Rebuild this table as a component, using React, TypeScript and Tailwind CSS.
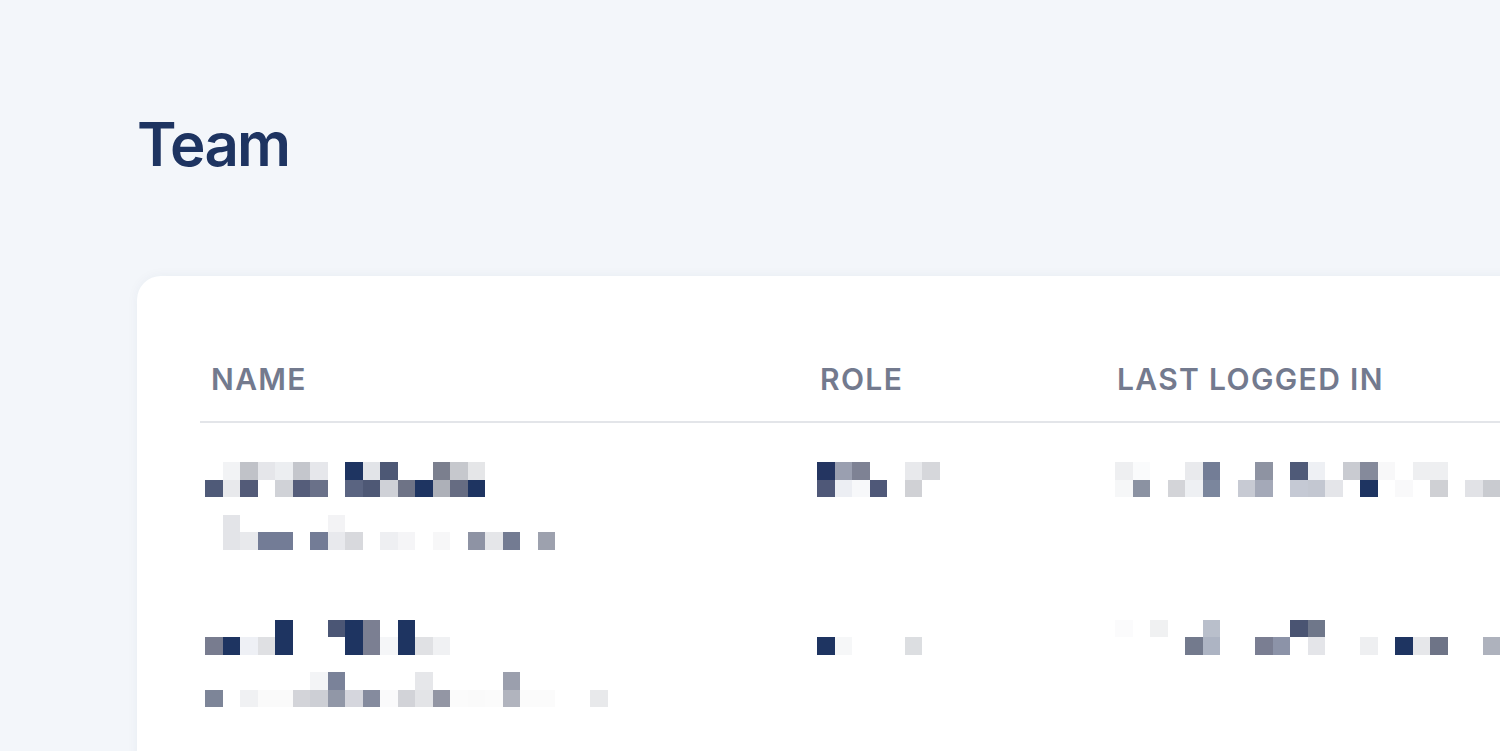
const NAVY = '#1e3461'

type Grid = string[][]

// pixelated (redacted) cell content, 17.5px blocks
const members: { name: Grid; role: Grid; last: Grid }[] = [
  {
    name: [
      ['', '#f2f3f5', '#c0c2c8', '#e5e6ea', '#eceef1', '#c4c6cc', '#e6e7eb', '', NAVY, '#e2e4e8', '#4d5875', '', '', '#7b7f8e', '#c6c8cd', '#e5e6e8'],
      ['#4f5a78', '#e8e9ec', '#535b78', '', '#d0d2d7', '#555d7a', '#6a7189', '', '#5a6481', '#4e5875', '#cfd1d7', '#6e7386', NAVY, '#adb0b8', '#666c82', NAVY],
      [],
      ['', '#e3e4e8', '', '', '', '', '', '#f3f3f5'],
      ['', '#e3e4e8', '#e8e9ec', '#737c96', '#737c96', '', '#737c96', '#e8e9ed', '#d8d9dd', '', '#eeeff2', '#f5f5f7', '', '#f7f7f8', '', '#8e93a4', '#e5e6e9', '#737b92', '', '#9da1ae'],
    ],
    role: [
      ['#243561', '#9a9fb0', '#7e8294', '', '', '#e8e9ec', '#d6d7db'],
      ['#4f5878', '#eceef3', '#f7f8fa', '#4f5878', '', '#d0d1d5', ''],
    ],
    last: [
      ['#eeeff1', '#fafbfc', '', '', '#e9eaed', '#737d96', '', '', '#8e93a2', '', '#4f5a78', '#eef0f4', '', '#c9cbd1', '#858a9b', '#f8f8f9', '', '#eeeff1', '#eeeff1'],
      ['#f6f7f8', '#8b92a2', '', '#d3d4d8', '#eef0f3', '#7b869d', '', '#c7cad3', '#a4a9b8', '', '#c5c9d4', '#c3c7d1', '#e4e5e9', '', NAVY, '', '#f9f9fa', '', '#cfd0d4', '', '#e1e2e6', '#c9cbd0'],
    ],
  },
  {
    name: [
      ['', '', '', '', NAVY, '', '', '#4b5675', NAVY, '#7b7f92', '', NAVY],
      ['#787c8f', NAVY, '#eef0f5', '#dfe0e3', NAVY, '', '', '', NAVY, '#7b7f92', '#f5f6f8', NAVY, '#e0e1e4', '#f0f1f3'],
      [],
      ['', '', '', '', '', '', '#f3f4f6', '#7a8299', '', '', '', '', '#e6e7ea', '', '', '', '', '#9b9fad'],
      ['#7d8598', '', '#f0f1f3', '#fafafa', '#fafafa', '#d3d4d9', '#cdcfd5', '#9197a7', '#d5d6dd', '#858b9e', '#fafafb', '#d2d3d8', '#e3e4e7', '#9396a4', '#fbfbfb', '#fafafa', '#fbfbfb', '#b1b4be', '#fbfbfb', '#fbfbfb', '', '', '#e8e9eb'],
    ],
    role: [
      [],
      [NAVY, '#f6f7f8', '', '', '', '#dcdee1'],
    ],
    last: [
      ['#fbfbfc', '', '#f0f1f2', '', '', '#b9bfcb', '', '', '', '', '#4a5472', '#6f778a'],
      ['', '', '', '', '#737a8d', '#adb4c3', '', '', '#7a7e92', '#8c93a8', '', '#e4e5e9', '', '', '#eeeff1', '', NAVY, '#e6e7ea', '#6e7487', '', '', '#aeb2bd'],
    ],
  },
]

function Mosaic({ rows }: { rows: Grid }) {
  return (
    <div className="flex flex-col">
      {rows.map((r, i) => (
        <div key={i} className="flex h-[17.5px]">
          {r.map((c, j) => (
            <div
              key={j}
              className="h-[17.5px] w-[17.5px] shrink-0"
              style={{ backgroundColor: c || 'transparent' }}
            />
          ))}
        </div>
      ))}
    </div>
  )
}

export default function App() {
  return (
    <div className="h-screen w-screen overflow-hidden bg-[#f3f6fa] font-['Inter',sans-serif]">
      <div className="pl-[137px] pt-[114px]">
        <h1 className="text-[60px] leading-[60px] font-semibold tracking-[-0.03em] text-[#1e3461]">
          Team
        </h1>

        <div className="mt-[102px] w-[1500px] rounded-[24px] bg-white pt-[85px] pb-[40px] pl-[63px] shadow-[0_0_12px_rgba(30,52,97,0.05)]">
          <div className="grid grid-cols-[612px_298px_1fr] border-b-2 border-[#e3e5e9] pb-[24px] text-[30px] leading-[36px] font-semibold tracking-[0.045em] text-[#737a8e]">
            <div className="pl-[11px]">NAME</div>
            <div className="pl-[8px]">ROLE</div>
            <div className="pl-[7px]">LAST LOGGED IN</div>
          </div>

          {members.map((m, i) => (
            <div key={i} className="grid h-[157.5px] grid-cols-[612px_298px_1fr] pt-[39px]">
              <div className="pl-[5px]">
                <Mosaic rows={m.name} />
              </div>
              <div className="pl-[5px]">
                <Mosaic rows={m.role} />
              </div>
              <div className="pl-[5px]">
                <Mosaic rows={m.last} />
              </div>
            </div>
          ))}
        </div>
      </div>
    </div>
  )
}
